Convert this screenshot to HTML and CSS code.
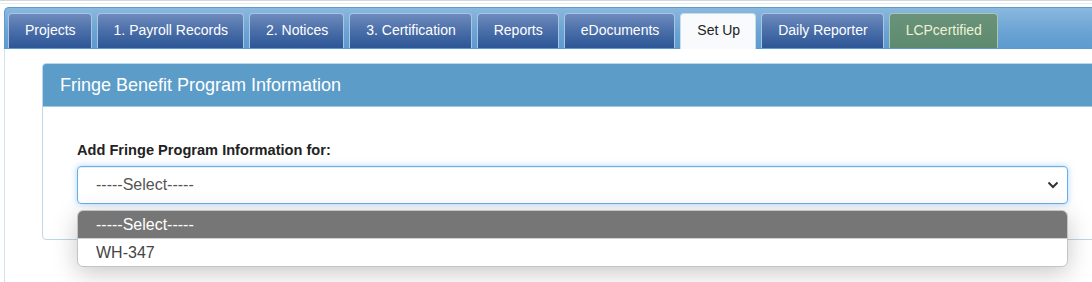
FILE: index.html
```html
<!DOCTYPE html>
<html>
<head>
    <link rel="stylesheet" href="styles.css">
    <title>Set Up - Fringe Benefits</title>
</head>
<body>
    <div class="topline"></div>

    <div class="tabbar">
        <ul class="tabs">
            <li class="tab">Projects</li>
            <li class="tab">1. Payroll Records</li>
            <li class="tab">2. Notices</li>
            <li class="tab">3. Certification</li>
            <li class="tab">Reports</li>
            <li class="tab">eDocuments</li>
            <li class="tab active">Set Up</li>
            <li class="tab">Daily Reporter</li>
            <li class="tab certified">LCPcertified</li>
        </ul>
    </div>

    <section class="content">
        <div class="panel">
            <div class="panel-heading">Fringe Benefit Program Information</div>
            <div class="panel-body">
                <div class="form-group">
                    <label for="program">Add Fringe Program Information for:</label>
                    <div class="select" id="program">
                        <span>-----Select-----</span>
                        <svg width="12" height="8" viewBox="0 0 12 8">
                            <path d="M1.5 1.5 L6 6 L10.5 1.5" fill="none" stroke="#333" stroke-width="2"/>
                        </svg>
                    </div>
                    <ul class="options">
                        <li class="option selected">-----Select-----</li>
                        <li class="option">WH-347</li>
                    </ul>
                </div>
            </div>
        </div>
    </section>
</body>
</html>
```

FILE: styles.css
```css
body {
    margin: 0;
    font-family: "Liberation Sans", Arial, sans-serif;
    background: #fff;
    overflow: hidden;
}

.topline {
    height: 2px;
    border-top: 1px solid #d4d8dc;
    border-bottom: 1px solid #e6edf3;
    margin-bottom: 3px;
}

.tabbar {
    margin-left: 4px;
    height: 35px;
    padding: 5px 0 0 3px;
    background: linear-gradient(#8ab8df, #6aa3d3 60%, #5e9bcf);
    border: 1px solid #5b9bd0;
    border-right: none;
    border-radius: 5px 0 0 0;
}

.tabs {
    display: flex;
    gap: 5px;
    margin: 0;
    padding: 0;
    list-style: none;
}

.tab {
    height: 34px;
    line-height: 33px;
    padding: 0 15px 0 16px;
    font-size: 14px;
    color: #fff;
    background: linear-gradient(#6e8bbd, #4a6ea8 50%, #2d5696);
    border: 1px solid #a8c6e4;
    border-bottom: none;
    border-radius: 4px 4px 0 0;
}

    .tab.active {
        height: 35px;
        color: #222;
        background: #f8fafc;
        border-color: #c9dcea;
    }

    .tab.certified {
        color: #eef1d6;
        background: linear-gradient(#6a937a, #5d8a6f);
        border-color: #a9c6b6;
    }

.content {
    margin-left: 4px;
    border-left: 1px solid #d3e3ef;
    padding: 14px 0 0 37px;
    height: 220px;
}

.panel {
    margin-right: -40px;
    border: 1px solid #bcd7ea;
    border-radius: 4px;
    background: #fff;
}

.panel-heading {
    height: 42px;
    line-height: 42px;
    padding-left: 17px;
    font-size: 18px;
    color: #fff;
    background: #5b9cc9;
    border-bottom: 1px solid #a4c9e3;
    border-radius: 3px 3px 0 0;
}

.panel-body {
    padding: 33px 0 35px 34px;
}

.form-group {
    position: relative;
    width: 991px;
}

    .form-group label {
        display: block;
        font-size: 14.6px;
        font-weight: bold;
        color: #222;
        line-height: 20px;
        margin-bottom: 6px;
    }

.select {
    display: flex;
    align-items: center;
    justify-content: space-between;
    box-sizing: border-box;
    height: 38px;
    padding: 0 8px 0 18px;
    font-size: 16px;
    color: #555;
    border: 1px solid #66afe9;
    border-radius: 4px;
    box-shadow: inset 0 1px 1px rgba(0, 0, 0, .075), 0 0 6px rgba(102, 175, 233, .55);
}

.options {
    position: absolute;
    top: 70px;
    left: 0;
    right: 0;
    margin: 0;
    padding: 0;
    list-style: none;
    background: #fff;
    border: 1px solid #c4c4c4;
    border-radius: 6px;
    overflow: hidden;
    box-shadow: 0 6px 24px rgba(0, 0, 0, .22);
}

.option {
    height: 27px;
    line-height: 27px;
    padding-left: 18px;
    font-size: 16px;
    color: #444;
}

    .option.selected {
        height: 27px;
        color: #fff;
        background: #767676;
        border-bottom: 1px solid #d0d0d0;
    }
```
